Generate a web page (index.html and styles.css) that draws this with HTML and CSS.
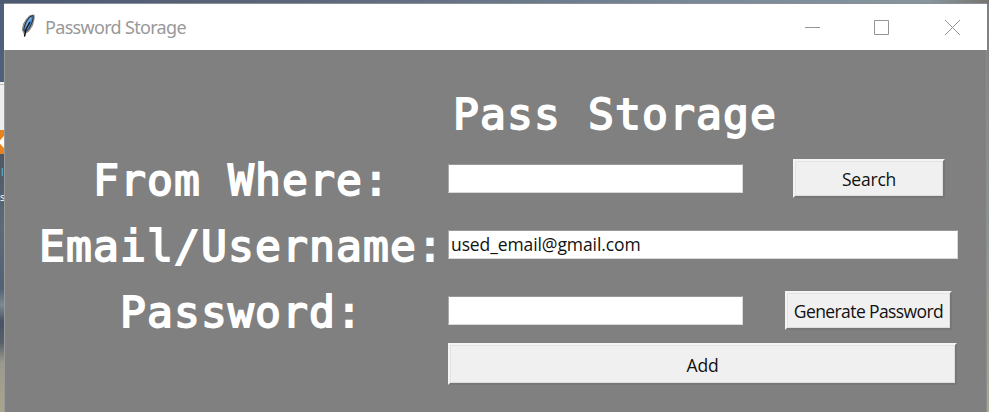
FILE: index.html
```html
<!DOCTYPE html>
<html lang="en">
<head>
<meta charset="utf-8">
<title>Password Storage</title>
<link rel="stylesheet" href="styles.css">
</head>
<body>
<div class="desktop">
  <div class="peek"><span class="arrow"></span><span class="peek-i">l</span><span class="peek-s">s</span></div>
  <div class="window">
    <header class="titlebar">
      <svg class="feather" width="16" height="26" viewBox="0 0 16 26">
        <path d="M14.500 1.500L10 2 6 6 3 11 1.800 17l1.700 3L4.500 24.500l1.500-4 3-2 4-6 1.700-7z" fill="#8b8b88"/>
        <path d="M13 2.500L9.500 4 6 9 4 15v3l2 .5 3-3 3-6 1.300-5z" fill="#4b87cc" stroke="#2c2f35" stroke-width="1"/>
        <path d="M11 5L8 9 5.500 16" fill="none" stroke="#79b0e8" stroke-width="1.400"/>
        <path d="M10 9L6 16 4.500 23.500" fill="none" stroke="#111" stroke-width="1.300"/>
      </svg>
      <span class="caption">Password Storage</span>
      <svg class="controls" width="160" height="20" viewBox="0 0 160 20" fill="none" stroke="#949494">
        <path d="M3 10.500h15M72.500 3.500h14v14h-14zM143 3l15 15M158 3l-15 15"/>
      </svg>
    </header>
    <main class="form">
      <h1 class="big title"><span>Pass Storage</span></h1>
      <label class="big row-site" for="site"><span>From Where:</span></label>
      <input class="entry row-site" id="site">
      <button class="btn search row-site"><span>Search</span></button>
      <label class="big row-email" for="email"><span>Email/Username:</span></label>
      <input class="entry wide row-email" id="email" value="used_email@gmail.com">
      <label class="big row-pass" for="pass"><span>Password:</span></label>
      <input class="entry row-pass" id="pass">
      <button class="btn generate row-pass"><span>Generate Password</span></button>
      <button class="btn add"><span>Add</span></button>
    </main>
  </div>
</div>
</body>
</html>
```
FILE: styles.css
```css
* { box-sizing: border-box; }
body { margin: 0; overflow: hidden; font-family: "Open Sans", "Noto Sans", sans-serif; }
.desktop {
  display: flex;
  width: 989px;
  height: 412px;
  padding: 3px 2px 0 0;
  background:
    linear-gradient(90deg, #4c5a72, #5c6678 30%, #7a8c9a 75%, #87959c 94%, #77736f) 0 0 / 100% 4px no-repeat,
    linear-gradient(180deg, #7b8180, #8d9591 60%, #a8a78f) 100% 0 / 2px 100% no-repeat,
    linear-gradient(180deg, #50607c 0 20%, #4e5765 38%, #5d6b78 55%, #526176 70%, #7c8b90 74%, #475366 78%, #56606a 83%, #9a998c 88%, #aaa58c);
}
.peek {
  width: 4px;
  flex: none;
  height: 124px;
  margin-top: 79px;
  overflow: hidden;
  background: linear-gradient(180deg, #eee 0 2px, #bbb 2px 3px, #eee 3px 48px, #e8821c 48px 72px, transparent 72px);
  font-size: 11px;
  line-height: 14px;
  color: #fff;
}
.peek span { display: block; }
.peek .arrow { width: 4px; height: 12px; margin: 54px 0 17px; background: #fff; clip-path: polygon(0 35%, 100% 0, 100% 100%, 0 65%); }
.peek-i { color: #5cb8f5; padding-left: 1px; height: 25px; }
.window { width: 983px; height: 409px; background: #808080; border-right: 1px solid #8c8c8c; border-left: 1px solid #999; }
.titlebar {
  display: flex;
  align-items: center;
  height: 47px;
  margin: 0 -1px;
  padding: 0 25px 0 16px;
  background: #fff;
  border-top: 1px solid #8a9099;
}
.feather { margin-top: -3px; }
.caption { margin-left: 9px; font-family: "Noto Sans", sans-serif; font-size: 18px; letter-spacing: -0.68px; color: #999; }
.controls { margin-left: auto; margin-top: -1px; }
.form {
  display: grid;
  grid-template-columns: 405px 333px 176px;
  grid-template-rows: 66px 66px 66px 66px 42px;
  padding: 29px 0 0 33px;
  align-items: center;
}
.big {
  margin: 0;
  padding: 4px 0 0 2px;
  justify-self: center;
  font-family: "DejaVu Sans Mono", monospace;
  font-size: 43px;
  line-height: 60px;
  font-weight: 400;
  letter-spacing: 1.1px;
  color: #fff;
  white-space: nowrap;
  -webkit-text-stroke: 1.8px #fff;
}
.title { grid-column: 2; grid-row: 1; margin-left: 9px; }
label.big { grid-column: 1; }
.row-site { grid-row: 2; }
.row-email { grid-row: 3; }
.row-pass { grid-row: 4; }
.entry {
  grid-column: 2;
  width: 295px;
  height: 29px;
  margin-left: 5px;
  padding: 0 2px 1px;
  border: 1px solid;
  border-color: #989898 #d8d8d8 #d8d8d8 #aaa;
  background: #fff;
  color: #111;
  font: 17.5px "Open Sans", sans-serif;
  letter-spacing: -0.1px;
}
.entry.wide { grid-column: 2 / 4; width: 510px; }
.btn {
  display: flex;
  align-items: center;
  justify-content: center;
  padding: 1px 0 0;
  justify-self: center;
  border: 2px solid;
  border-color: #f4f4f4 #777 #777 #f4f4f4;
  background: #f0f0f0;
  box-shadow: inset 1px 1px #e3e3e3, inset -1px -1px #ddd;
  color: #111;
  font: 17.5px "Open Sans", sans-serif;
  letter-spacing: -0.6px;
  white-space: nowrap;
}
.search { grid-column: 3; width: 152px; height: 39px; margin-left: 10px; }
.generate { grid-column: 3; width: 167px; height: 39px; margin-left: 9px; }
.add { grid-column: 2 / 4; grid-row: 5; justify-self: start; width: 509px; height: 42px; margin-left: 5px; }
.search, .add { letter-spacing: -0.2px; }
```
